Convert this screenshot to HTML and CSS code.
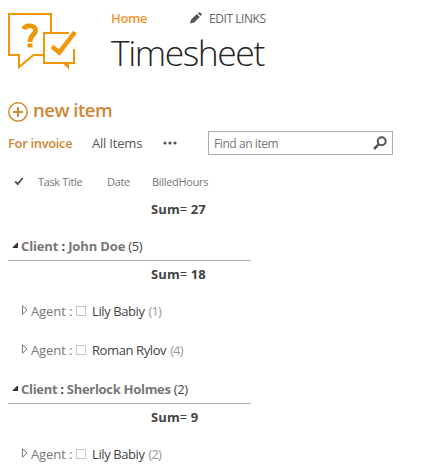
FILE: index.html
```html
<!DOCTYPE html>
<html lang="en">
<head>
<meta charset="utf-8">
<title>Timesheet</title>
<link rel="stylesheet" href="styles.css">
</head>
<body>
<header class="header">
  <svg class="logo" width="72" height="60" viewBox="0 0 72 60" fill="none" stroke="#f09609" stroke-width="2">
    <path d="M36 43H25.500L11 55V43H1V2H43V20"/>
    <path d="M66 37V51H36V21H61"/>
    <path d="M55 51.500H61V57.500Z" fill="#f09609" stroke="none"/>
    <path d="M15.500 17C17.500 12.500 28 12.500 27.500 18.500C27.200 23 22 23 22 30" stroke-width="4.800"/>
    <path d="M19.500 31.500H24.500V35.500H19.500Z" fill="#f09609" stroke="none"/>
    <path d="M44 34.500L51.200 40.500L67 20" stroke-width="4.500"/>
  </svg>
  <div class="heading">
    <nav class="nav">
      <a class="home">Home</a>
      <svg class="pencil" width="12" height="12" viewBox="0 0 12 12" fill="#555"><path d="M0 11.500L1.200 7.500L6.800 2L9.800 5L4.200 10.500ZM7.700 1.200L8.700 .4Q9.500-.1 10.200 .5L11.400 1.700Q11.900 2.400 11.400 3.100L10.600 4.100Z"/></svg>
      <a class="edit">EDIT LINKS</a>
    </nav>
    <h1 class="title">Timesheet</h1>
  </div>
</header>
<div class="new">
  <svg width="20" height="20" viewBox="0 0 20 20" fill="none" stroke="#d08634"><circle cx="10" cy="10" r="9.200" stroke-width="1.500"/><path d="M10 5V15M5 10H15" stroke-width="2"/></svg>
  <a class="new-label">new item</a>
</div>
<div class="views">
  <a class="view current">For invoice</a>
  <a class="view all">All Items</a>
  <svg class="more" width="14" height="4" viewBox="0 0 14 4" fill="#555"><circle cx="2" cy="2" r="1.600"/><circle cx="7" cy="2" r="1.600"/><circle cx="12" cy="2" r="1.600"/></svg>
  <div class="search">
    <span class="hint">Find an item</span>
    <svg width="14" height="14" viewBox="0 0 14 14" fill="none" stroke="#555"><circle cx="8.700" cy="5.200" r="4" stroke-width="2"/><path d="M5.700 8.300L1 13" stroke-width="2.500"/></svg>
  </div>
</div>
<main class="list">
  <div class="columns">
    <svg width="10" height="9" viewBox="0 0 10 9" fill="none" stroke="#555" stroke-width="1.900"><path d="M1.200 4.500L3.700 7L8.700 1"/></svg>
    <span class="col-task">Task Title</span><span class="col-date">Date</span><span class="col-hours">BilledHours</span>
  </div>
  <div class="sum"><span>Sum<i>=</i> 27</span></div>
  <div class="client first">
    <svg class="open" width="7" height="6" viewBox="0 0 7 6"><path d="M5.500 1V5.500H1Z" fill="#444" stroke="#222"/></svg>
    <b class="john"><em>Client</em> : <em>John Doe</em></b><span class="count">(5)</span>
  </div>
  <div class="sum"><span>Sum<i>=</i> 18</span></div>
  <div class="agents">
    <div class="agent">
      <svg class="closed" width="6" height="10" viewBox="0 0 6 10"><path d="M.5 .8V9.200L5 5Z" fill="none" stroke="#777"/></svg>
      <span class="key">Agent :</span><span class="box"></span><span class="name">Lily Babiy</span><span class="n">(1)</span>
    </div>
    <div class="agent">
      <svg class="closed" width="6" height="10" viewBox="0 0 6 10"><path d="M.5 .8V9.200L5 5Z" fill="none" stroke="#777"/></svg>
      <span class="key">Agent :</span><span class="box"></span><span class="name">Roman Rylov</span><span class="n">(4)</span>
    </div>
  </div>
  <div class="client">
    <svg class="open" width="7" height="6" viewBox="0 0 7 6"><path d="M5.500 1V5.500H1Z" fill="#444" stroke="#222"/></svg>
    <b class="sherlock"><em>Client</em> : <em>Sherlock Holmes</em></b><span class="count">(2)</span>
  </div>
  <div class="sum"><span>Sum<i>=</i> 9</span></div>
  <div class="agents">
    <div class="agent">
      <svg class="closed" width="6" height="10" viewBox="0 0 6 10"><path d="M.5 .8V9.200L5 5Z" fill="none" stroke="#777"/></svg>
      <span class="key">Agent :</span><span class="box"></span><span class="name">Lily Babiy</span><span class="n">(2)</span>
    </div>
  </div>
</main>
</body>
</html>
```
FILE: styles.css
```css
* { box-sizing: border-box; }
body { margin: 0; padding: 0 8px; width: 434px; height: 476px; overflow: hidden; background: #fff; color: #444; font: 13px/18px "Open Sans", "Noto Sans", sans-serif; letter-spacing: -0.3px; white-space: nowrap; }
svg { flex: none; display: block; }
span, a, b { flex: none; }
.header { display: flex; height: 96px; }
.logo { margin-top: 12px; }
.heading { margin-left: 31px; padding-top: 8px; }
.nav { display: flex; align-items: center; height: 20px; }
.home { width: 79px; color: #f0962a; font-weight: 600; letter-spacing: -0.35px; padding-bottom: 1px; }
.pencil { margin-right: 7px; }
.edit { color: #666; font-size: 12px; letter-spacing: -0.45px; padding-top: 1px; }
.title { margin: 0; font-size: 35.500px; line-height: 48px; font-weight: 300; letter-spacing: -1.450px; color: #262626; }
.new { display: flex; align-items: center; height: 31px; color: #d08634; }
.new-label { margin-left: 5px; padding-bottom: 3px; font-size: 18.500px; line-height: 28px; font-weight: 600; letter-spacing: -0.5px; }
.views { display: flex; align-items: center; height: 32px; }
.current { width: 84px; color: #d08634; font-weight: 600; letter-spacing: -0.35px; }
.all { width: 71px; color: #555; letter-spacing: -0.2px; }
.more { margin-right: 31px; }
.search { display: flex; align-items: center; justify-content: space-between; width: 185px; height: 24px; padding: 0 5px; border: 1px solid #ababab; color: #777; font-size: 12px; }
.hint { letter-spacing: -0.42px; padding-top: 1px; }
.list { margin-top: 9px; width: 243px; }
.columns { display: flex; align-items: center; height: 28px; padding-left: 6px; color: #777; font-size: 11px; }
.columns svg { margin-bottom: 2px; }
.col-task { width: 69px; margin-left: 14px; letter-spacing: -0.35px; }
.col-date { width: 45px; }
.sum { height: 26px; padding-left: 143px; line-height: 26px; font-weight: 700; letter-spacing: 0.1px; }
.sum i { font-style: normal; font-weight: 400; }
.client { display: flex; align-items: center; height: 34px; padding: 4px 0 0 4px; border-bottom: 1px solid #b0b0b0; }
.first { margin-top: 5px; }
.open { margin: 0 2px 2px 0; }
.client em { font-style: normal; color: #777; }
.john { letter-spacing: -0.15px; }
.sherlock { letter-spacing: -0.3px; }
.count { margin-left: 3px; letter-spacing: -0.3px; }
.agents { padding-top: 4px; margin-bottom: 1px; }
.agent { display: flex; align-items: center; height: 39px; padding-left: 14px; color: #777; }
.closed { margin: 0 3px 2px 0; }
.key { width: 45px; letter-spacing: -0.1px; }
.box { width: 10px; height: 10px; border: 1px solid #c6c6c6; }
.name { margin-left: 6px; color: #444; letter-spacing: -0.4px; }
.n { margin-left: 4px; color: #999; letter-spacing: -0.9px; }
```
